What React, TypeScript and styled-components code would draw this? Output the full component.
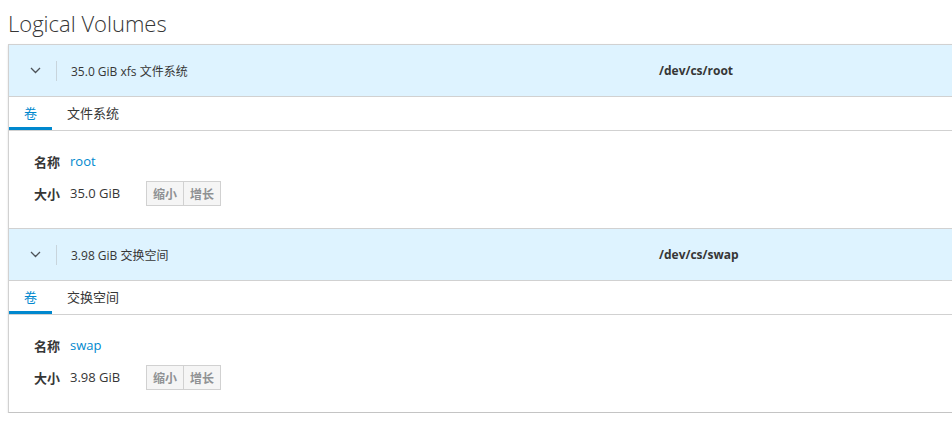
import React from "react";
import styled, { createGlobalStyle } from "styled-components";

const Global = createGlobalStyle`
  html, body { margin: 0; padding: 0; overflow: hidden; background: #fff; }
  body {
    font-family: "Open Sans", "Noto Sans CJK SC", sans-serif;
    color: #363636;
    font-size: 12px;
  }
`;

const Page = styled.div`
  width: 1200px;
  padding: 0 8px;
`;

const Title = styled.h2`
  margin: 0;
  padding-top: 8px;
  height: 44px;
  box-sizing: border-box;
  font-size: 22px;
  font-weight: 300;
  line-height: 30px;
  color: #363636;
`;

const Panel = styled.div`
  border: 1px solid #d1d1d1;
  border-bottom-color: #c4c4c4;
  box-shadow: 0 1px 2px rgba(0, 0, 0, 0.12);
  background: #fff;
`;

const Item = styled.div<{ $first?: boolean }>`
  border-top: ${(p) => (p.$first ? "none" : "1px solid #d1d1d1")};
`;

const Header = styled.div`
  display: flex;
  align-items: center;
  height: 51px;
  background: #def3ff;
  border-bottom: 1px solid #d1d1d1;
`;

const Toggle = styled.div`
  width: 47px;
  padding-left: 5px;
  box-sizing: border-box;
  display: flex;
  justify-content: center;
  align-items: center;
  color: #4d5258;
`;

const Divider = styled.div`
  width: 1px;
  height: 20px;
  background: #c8d4dc;
`;

const Desc = styled.div`
  width: 602px;
  padding-left: 14px;
  box-sizing: border-box;
  font-size: 12px;
  color: #363636;
`;

const Path = styled.div`
  font-size: 12px;
  font-weight: 700;
  color: #363636;
`;

const Tabs = styled.div`
  display: flex;
  height: 33px;
  border-bottom: 1px solid #d1d1d1;
`;

const Tab = styled.div<{ $active?: boolean }>`
  padding: 0 15px 2px;
  display: flex;
  align-items: center;
  font-size: 13px;
  color: ${(p) => (p.$active ? "#0088ce" : "#363636")};
  box-shadow: ${(p) => (p.$active ? "inset 0 -3px 0 #0088ce" : "none")};
`;

const Body = styled.div`
  padding: 14px 0 19px 25px;
  display: flex;
  flex-direction: column;
`;

const Row = styled.div`
  display: flex;
  align-items: center;
  height: 32px;
`;

const Label = styled.div`
  width: 36px;
  font-size: 13px;
  font-weight: 700;
  color: #363636;
`;

const Value = styled.div<{ $link?: boolean; $w?: number }>`
  font-size: 13px;
  color: ${(p) => (p.$link ? "#0088ce" : "#363636")};
  width: ${(p) => (p.$w ? `${p.$w}px` : "auto")};
`;

const BtnGroup = styled.div`
  display: flex;
`;

const Btn = styled.button`
  height: 25px;
  width: 38px;
  padding: 0;
  border: 1px solid #d1d1d1;
  background: #f5f5f5;
  color: #8f9193;
  font-family: "Noto Sans CJK SC", sans-serif;
  font-size: 12px;
  font-weight: 700;
  & + & { margin-left: -1px; }
`;

const Chevron = () => (
  <svg width="11" height="7" viewBox="0 0 11 7" fill="none">
    <path d="M1 1l4.5 4.5L10 1" stroke="#4d5258" strokeWidth="1.3" />
  </svg>
);

type LV = { desc: string; path: string; tab2: string; name: string; size: string };

const lvs: LV[] = [
  { desc: "35.0 GiB xfs 文件系统", path: "/dev/cs/root", tab2: "文件系统", name: "root", size: "35.0 GiB" },
  { desc: "3.98 GiB 交换空间", path: "/dev/cs/swap", tab2: "交换空间", name: "swap", size: "3.98 GiB" },
];

export default function App() {
  return (
    <>
      <Global />
      <Page>
        <Title>Logical Volumes</Title>
        <Panel>
          {lvs.map((lv, i) => (
            <Item key={lv.path} $first={i === 0}>
              <Header>
                <Toggle>
                  <Chevron />
                </Toggle>
                <Divider />
                <Desc>{lv.desc}</Desc>
                <Path>{lv.path}</Path>
              </Header>
              <Tabs>
                <Tab $active>卷</Tab>
                <Tab>{lv.tab2}</Tab>
              </Tabs>
              <Body>
                <Row>
                  <Label>名称</Label>
                  <Value $link>{lv.name}</Value>
                </Row>
                <Row>
                  <Label>大小</Label>
                  <Value $w={76}>{lv.size}</Value>
                  <BtnGroup>
                    <Btn>缩小</Btn>
                    <Btn>增长</Btn>
                  </BtnGroup>
                </Row>
              </Body>
            </Item>
          ))}
        </Panel>
      </Page>
    </>
  );
}
